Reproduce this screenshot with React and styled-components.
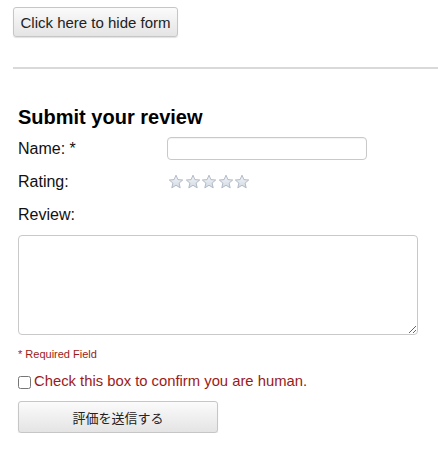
import React from 'react'
import styled, { createGlobalStyle } from 'styled-components'

const Global = createGlobalStyle`
  body {
    margin: 0;
    background: #fff;
    font-family: "Liberation Sans", Arial, "Noto Sans CJK JP", sans-serif;
    color: #111;
  }
`

function Star() {
  return (
    <svg width="16" height="16" viewBox="0 0 16 16">
      <defs>
        <linearGradient id="sg" x1="0" y1="0" x2="0" y2="1">
          <stop offset="0" stopColor="#f4f6f9" />
          <stop offset="1" stopColor="#d3dae4" />
        </linearGradient>
      </defs>
      <path
        d="M8 1.2 L9.9 5.6 L14.7 6 L11.1 9.1 L12.2 13.8 L8 11.3 L3.8 13.8 L4.9 9.1 L1.3 6 L6.1 5.6 Z"
        fill="url(#sg)"
        stroke="#a9b3c1"
        strokeWidth="0.9"
        strokeLinejoin="round"
      />
    </svg>
  )
}

function App() {
  return (
    <Page>
      <Global />
      <Top>
        <ToggleButton>Click here to hide form</ToggleButton>
      </Top>
      <Rule />
      <Form>
        <Heading>Submit your review</Heading>
        <Row>
          <Label>Name: *</Label>
          <TextInput type="text" />
        </Row>
        <Row>
          <Label>Rating:</Label>
          <Stars>
            {[0, 1, 2, 3, 4].map(i => <Star key={i} />)}
          </Stars>
        </Row>
        <Row>
          <Label>Review:</Label>
        </Row>
        <TextArea />
        <Required>* Required Field</Required>
        <Human>
          <input type="checkbox" />
          <span>Check this box to confirm you are human.</span>
        </Human>
        <SubmitButton>評価を送信する</SubmitButton>
      </Form>
    </Page>
  )
}

export default App

const Page = styled.div`
  width: 438px;
  padding-top: 7px;
`
const Top = styled.div`
  padding-left: 13px;
`
const ButtonBase = styled.button`
  font-family: "Liberation Sans", Arial, "Noto Sans CJK JP", sans-serif;
  color: #222;
  background: linear-gradient(#fbfbfb, #e4e4e4);
  border: 1px solid #c6c6c6;
  border-radius: 3px;
  box-shadow: 0 1px 1px rgba(0,0,0,0.12);
  cursor: pointer;
`
const ToggleButton = styled(ButtonBase)`
  height: 30px;
  width: 165px;
  font-size: 15px;
  padding: 0;
`
const Rule = styled.div`
  margin: 30px 0 0 13px;
  height: 2px;
  background: #d9d9d9;
`
const Form = styled.div`
  padding: 0 0 0 18px;
`
const Heading = styled.h2`
  margin: 37px 0 0;
  font-size: 20px;
  font-weight: bold;
  line-height: 22px;
  color: #000;
`
const Row = styled.div`
  display: flex;
  align-items: center;
  height: 33px;
  &:first-of-type {
    margin-top: 4px;
  }
`
const Label = styled.div`
  width: 149px;
  font-size: 16px;
  color: #111;
`
const TextInput = styled.input`
  width: 200px;
  height: 23px;
  box-sizing: border-box;
  border: 1px solid #c9c9c9;
  border-radius: 4px;
  box-shadow: inset 0 1px 1px rgba(0,0,0,0.05);
  margin-top: 0;
`
const Stars = styled.div`
  display: flex;
  gap: 0.5px;
  margin-left: 1px;
`
const TextArea = styled.textarea`
  display: block;
  margin-top: 4px;
  width: 400px;
  height: 100px;
  box-sizing: border-box;
  border: 1px solid #c9c9c9;
  border-radius: 4px;
  resize: both;
`
const Required = styled.div`
  margin-top: 13px;
  font-size: 11px;
  color: #9a1a1a;
`
const Human = styled.label`
  display: flex;
  align-items: center;
  margin-top: 12px;
  font-size: 14.8px;
  color: #9a1a1a;
  input {
    margin: 4px 3px 0 0;
    width: 13px;
    height: 13px;
  }
`
const SubmitButton = styled(ButtonBase)`
  margin-top: 12px;
  width: 200px;
  height: 32px;
  font-size: 13px;
`
